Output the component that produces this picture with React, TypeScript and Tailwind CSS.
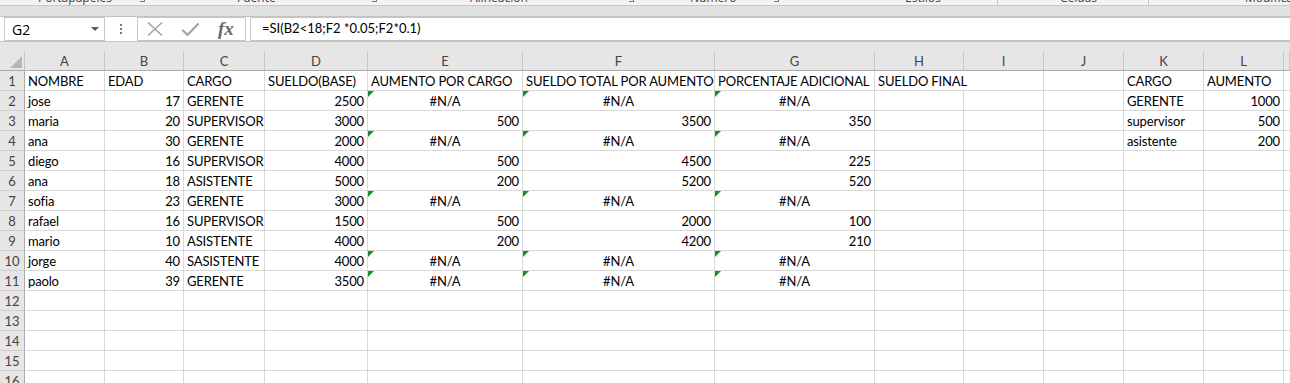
import React from "react";

type Row = string[];

const COL_LETTERS = ["A", "B", "C", "D", "E", "F", "G", "H", "I", "J", "K", "L", ""];

const ROWS: Row[] = [
  ["NOMBRE", "EDAD", "CARGO", "SUELDO(BASE)", "AUMENTO POR CARGO", "SUELDO TOTAL POR AUMENTO", "PORCENTAJE ADICIONAL", "SUELDO FINAL", "", "", "CARGO", "AUMENTO", ""],
  ["jose", "17", "GERENTE", "2500", "#N/A", "#N/A", "#N/A", "", "", "", "GERENTE", "1000", ""],
  ["maria", "20", "SUPERVISOR", "3000", "500", "3500", "350", "", "", "", "supervisor", "500", ""],
  ["ana", "30", "GERENTE", "2000", "#N/A", "#N/A", "#N/A", "", "", "", "asistente", "200", ""],
  ["diego", "16", "SUPERVISOR", "4000", "500", "4500", "225", "", "", "", "", "", ""],
  ["ana", "18", "ASISTENTE", "5000", "200", "5200", "520", "", "", "", "", "", ""],
  ["sofia", "23", "GERENTE", "3000", "#N/A", "#N/A", "#N/A", "", "", "", "", "", ""],
  ["rafael", "16", "SUPERVISOR", "1500", "500", "2000", "100", "", "", "", "", "", ""],
  ["mario", "10", "ASISTENTE", "4000", "200", "4200", "210", "", "", "", "", "", ""],
  ["jorge", "40", "SASISTENTE", "4000", "#N/A", "#N/A", "#N/A", "", "", "", "", "", ""],
  ["paolo", "39", "GERENTE", "3500", "#N/A", "#N/A", "#N/A", "", "", "", "", "", ""],
  ["", "", "", "", "", "", "", "", "", "", "", "", ""],
  ["", "", "", "", "", "", "", "", "", "", "", "", ""],
  ["", "", "", "", "", "", "", "", "", "", "", "", ""],
  ["", "", "", "", "", "", "", "", "", "", "", "", ""],
  ["", "", "", "", "", "", "", "", "", "", "", "", ""],
];

const GRID = "grid grid-cols-[25px_80px_79px_81px_103px_155px_192px_160px_89px_80px_80px_80px_80px_1fr]";

function Cell({ value, rowIdx, colIdx }: { value: string; rowIdx: number; colIdx: number }) {
  const isErr = value === "#N/A";
  const isNum = /^\d+$/.test(value);
  // "SUELDO FINAL" spills into I, so the H gridline is hidden on row 1
  const spill = rowIdx === 0 && colIdx === 7;
  return (
    <div
      className={`relative h-[20px] border-b border-[#d9d9d9] px-[3px] flex items-center whitespace-nowrap text-[13px] leading-none tracking-[-0.15px] text-black ${
        spill ? "overflow-visible z-10" : "border-r overflow-hidden"
      } ${isErr ? "justify-center" : isNum ? "justify-end" : "justify-start"}`}
    >
      {isErr && (
        <div className="absolute top-0 left-0 w-0 h-0 border-t-[6px] border-r-[6px] border-t-[#1d8a2e] border-r-transparent" />
      )}
      <span className="pt-[2px]">{value}</span>
    </div>
  );
}

function RibbonStrip() {
  const label = "text-[12px] leading-none text-[#444] whitespace-nowrap -mt-[8px]";
  const mark = "w-[5px] h-[3px] border-r border-b border-[#777] ml-auto mr-[6px] -mt-[1px]";
  return (
    <div className="h-[6px] flex bg-[#f3f3f3] border-b border-[#c8c8c8] overflow-hidden font-['Open_Sans',sans-serif]">
      <div className="w-[38px] shrink-0" />
      <div className="w-[113px] shrink-0 flex">
        <span className={label}>Portapapeles</span>
        <div className={mark} />
      </div>
      <div className="w-[86px] shrink-0" />
      <div className="w-[146px] shrink-0 flex">
        <span className={label}>Fuente</span>
        <div className={mark} />
      </div>
      <div className="w-[87px] shrink-0" />
      <div className="w-[170px] shrink-0 flex">
        <span className={label}>Alineación</span>
        <div className={mark} />
      </div>
      <div className="w-[50px] shrink-0" />
      <div className="w-[95px] shrink-0 flex">
        <span className={label}>Número</span>
        <div className={mark} />
      </div>
      <div className="w-[120px] shrink-0" />
      <div className="w-[93px] shrink-0 flex">
        <span className={label}>Estilos</span>
        <div className="w-px h-full bg-[#c8c8c8] ml-auto" />
      </div>
      <div className="w-[62px] shrink-0" />
      <div className="w-[89px] shrink-0 flex">
        <span className={label}>Celdas</span>
        <div className="w-px h-full bg-[#c8c8c8] ml-auto" />
      </div>
      <div className="w-[96px] shrink-0" />
      <div className="shrink-0 flex">
        <span className={label}>Modificar</span>
      </div>
    </div>
  );
}

function FormulaBar() {
  return (
    <div className="h-[24px] flex bg-white">
      <div className="ml-[4px] w-[101px] border border-[#c6c6c6] flex items-center justify-between pl-[7px] pr-[5px] font-['Open_Sans',sans-serif] text-[14px] text-black">
        <span>G2</span>
        <div className="w-0 h-0 border-l-[4px] border-r-[4px] border-t-[4px] border-l-transparent border-r-transparent border-t-[#555]" />
      </div>
      <div className="w-[32px] flex flex-col items-center justify-center gap-[2px]">
        <div className="w-[2px] h-[2px] bg-[#777]" />
        <div className="w-[2px] h-[2px] bg-[#777]" />
        <div className="w-[2px] h-[2px] bg-[#777]" />
      </div>
      <div className="w-[109px] border border-[#c6c6c6] flex items-center">
        <svg width="18" height="16" viewBox="0 0 18 16" className="ml-[8px]">
          <path d="M2 1.5 L16 14.5 M16 1.5 L2 14.5" stroke="#a3a3a3" strokeWidth="1.6" fill="none" />
        </svg>
        <svg width="19" height="15" viewBox="0 0 19 15" className="ml-[17px]">
          <path d="M1.5 8 L6.5 13 L17.5 1.5" stroke="#a3a3a3" strokeWidth="2.2" fill="none" />
        </svg>
        <span className="ml-[18px] font-['Liberation_Serif',serif] italic font-bold text-[19px] leading-none text-[#6a6a6a] -mt-[2px]">
          fx
        </span>
      </div>
      <div className="ml-[4px] flex-1 border-t border-b border-l border-[#c6c6c6] flex items-center pl-[11px] font-['Lato',sans-serif] text-[13px] text-black">
        =SI(B2&lt;18;F2 *0.05;F2*0.1)
      </div>
    </div>
  );
}

function ColumnHeader() {
  return (
    <div className="bg-[#e6e6e6] border-t border-[#c3c3c3] pt-[10px]">
      <div className={GRID}>
        <div className="h-[19px] border-b border-[#ababab] border-r border-r-[#c6c6c6] flex items-end justify-end pr-[2px] pb-[2px]">
          <svg width="12" height="12" viewBox="0 0 12 12">
            <path d="M12 0 L12 12 L0 12 Z" fill="#b7b7b7" />
          </svg>
        </div>
        {COL_LETTERS.map((c, i) => (
          <div
            key={i}
            className="h-[19px] border-b border-[#ababab] border-r border-r-[#c6c6c6] flex items-center justify-center text-[13px] leading-none text-[#444]"
          >
            <span className="pt-[1px]">{c}</span>
          </div>
        ))}
      </div>
    </div>
  );
}

export default function App() {
  return (
    <div className="w-[1290px] h-[383px] overflow-hidden bg-white font-['Lato',sans-serif]">
      <RibbonStrip />
      <div className="h-[11px] bg-[#e1e1e1] border-b border-[#c3c3c3]" />
      <FormulaBar />
      <ColumnHeader />
      {ROWS.map((row, r) => (
        <div key={r} className={GRID}>
          <div className="h-[20px] bg-[#e6e6e6] border-r border-[#ababab] border-b border-b-[#cfcfcf] flex items-center justify-center text-[13px] leading-none text-[#444]">
            <span className="pt-[2px]">{r + 1}</span>
          </div>
          {row.map((v, c) => (
            <Cell key={c} value={v} rowIdx={r} colIdx={c} />
          ))}
        </div>
      ))}
    </div>
  );
}
